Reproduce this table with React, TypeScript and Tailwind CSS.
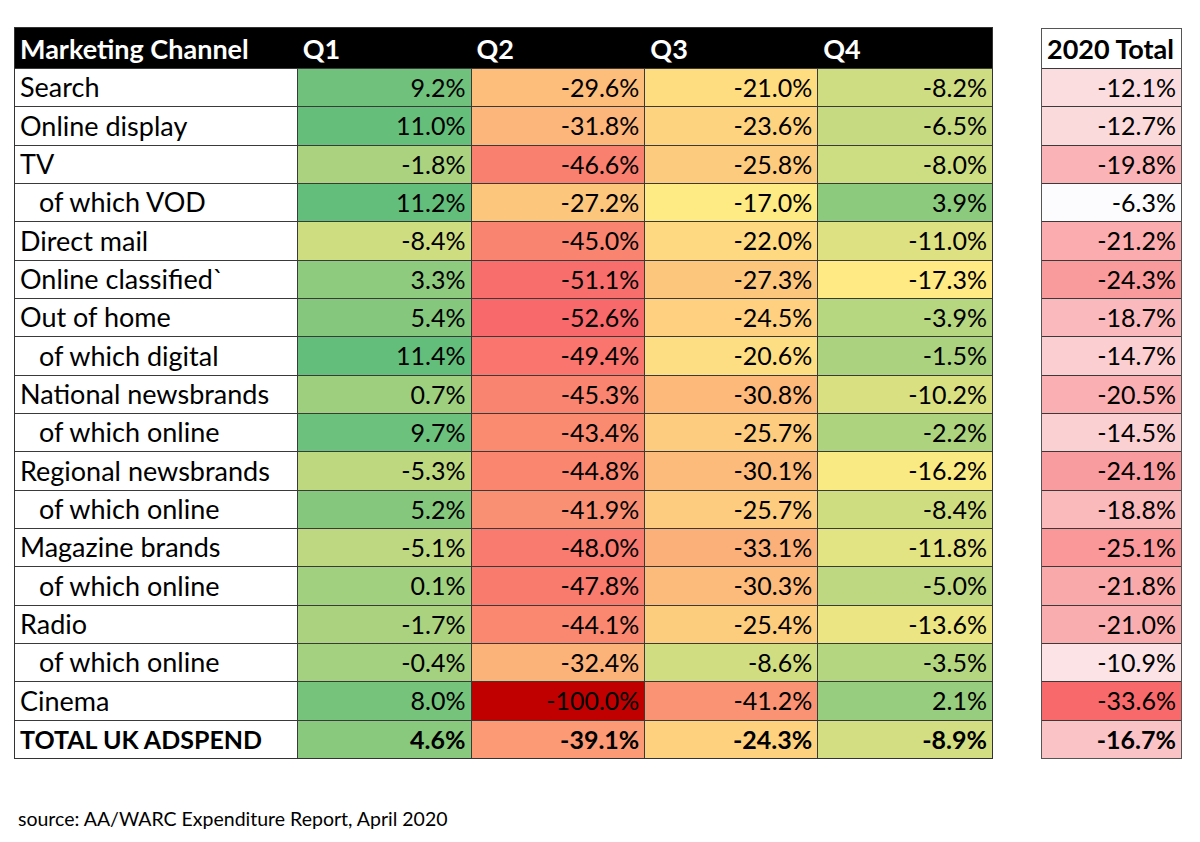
import React from "react";

type Row = { label: string; indent?: boolean; bold?: boolean; q: number[]; total: number };

const rows: Row[] = [
  { label: "Search", q: [9.2, -29.6, -21.0, -8.2], total: -12.1 },
  { label: "Online display", q: [11.0, -31.8, -23.6, -6.5], total: -12.7 },
  { label: "TV", q: [-1.8, -46.6, -25.8, -8.0], total: -19.8 },
  { label: "of which VOD", indent: true, q: [11.2, -27.2, -17.0, 3.9], total: -6.3 },
  { label: "Direct mail", q: [-8.4, -45.0, -22.0, -11.0], total: -21.2 },
  { label: "Online classified`", q: [3.3, -51.1, -27.3, -17.3], total: -24.3 },
  { label: "Out of home", q: [5.4, -52.6, -24.5, -3.9], total: -18.7 },
  { label: "of which digital", indent: true, q: [11.4, -49.4, -20.6, -1.5], total: -14.7 },
  { label: "National newsbrands", q: [0.7, -45.3, -30.8, -10.2], total: -20.5 },
  { label: "of which online", indent: true, q: [9.7, -43.4, -25.7, -2.2], total: -14.5 },
  { label: "Regional newsbrands", q: [-5.3, -44.8, -30.1, -16.2], total: -24.1 },
  { label: "of which online", indent: true, q: [5.2, -41.9, -25.7, -8.4], total: -18.8 },
  { label: "Magazine brands", q: [-5.1, -48.0, -33.1, -11.8], total: -25.1 },
  { label: "of which online", indent: true, q: [0.1, -47.8, -30.3, -5.0], total: -21.8 },
  { label: "Radio", q: [-1.7, -44.1, -25.4, -13.6], total: -21.0 },
  { label: "of which online", indent: true, q: [-0.4, -32.4, -8.6, -3.5], total: -10.9 },
  { label: "Cinema", q: [8.0, -100.0, -41.2, 2.1], total: -33.6 },
  { label: "TOTAL UK ADSPEND", bold: true, q: [4.6, -39.1, -24.3, -8.9], total: -16.7 },
];

const RED = [248, 105, 107];
const YEL = [255, 235, 132];
const GRN = [99, 190, 123];
const WHT = [252, 252, 255];

function mix(a: number[], b: number[], t: number) {
  const c = a.map((x, i) => Math.round(x + (b[i] - x) * t));
  return `rgb(${c[0]},${c[1]},${c[2]})`;
}

function qColor(v: number) {
  if (v <= -100) return "#C00000";
  const min = -52.6;
  const mid = -17.1;
  const max = 11.4;
  if (v <= mid) {
    const t = Math.max(0, Math.min(1, (v - min) / (mid - min)));
    return mix(RED, YEL, t);
  }
  const t = Math.max(0, Math.min(1, (v - mid) / (max - mid)));
  return mix(YEL, GRN, t);
}

function tColor(v: number) {
  const min = -33.6;
  const max = -6.3;
  const t = Math.max(0, Math.min(1, (v - min) / (max - min)));
  return mix(RED, WHT, t);
}

const fmt = (v: number) => `${v.toFixed(1)}%`;

const qWidths = ["w-[174px]", "w-[174px]", "w-[173px]", "w-[174px]"];

export default function App() {
  return (
    <div
      className="w-[1200px] h-[842px] bg-white text-black pt-[27px] pl-[14px]"
      style={{ fontFamily: "Lato, 'Open Sans', sans-serif" }}
    >
      <div className="flex items-start">
        {/* Main table */}
        <div className="flex flex-col w-[979px] border border-[#333]">
          <div className="flex h-[40px] bg-black text-white font-bold text-[27px] leading-none items-center">
            <div className="w-[283px] pl-[5px]">Marketing Channel</div>
            {["Q1", "Q2", "Q3", "Q4"].map((q, i) => (
              <div key={q} className={`${qWidths[i]} pl-[5px]`}>
                {q}
              </div>
            ))}
          </div>
          {rows.map((r, ri) => (
            <div
              key={ri}
              className={`flex h-[38.33px] border-t border-[#3a3a3a] text-[25px] ${r.bold ? "font-bold" : ""}`}
            >
              <div
                className={`w-[283px] border-r border-[#3a3a3a] flex items-center ${r.indent ? "pl-[24px]" : "pl-[5px]"} ${r.bold ? "text-[25px]" : "text-[27px]"} bg-white`}
              >
                {r.label}
              </div>
              {r.q.map((v, i) => (
                <div
                  key={i}
                  className={`${qWidths[i]} flex items-center justify-end pr-[5px] ${i < 3 ? "border-r border-[#3a3a3a]" : ""}`}
                  style={{ backgroundColor: qColor(v) }}
                >
                  {fmt(v)}
                </div>
              ))}
            </div>
          ))}
        </div>

        {/* Total table */}
        <div className="ml-[48px] flex flex-col w-[141px] border border-[#555] mt-[1px]">
          <div className="flex h-[39px] bg-white font-bold text-[27px] leading-none items-center pl-[5px]">
            2020 Total
          </div>
          {rows.map((r, ri) => (
            <div
              key={ri}
              className={`flex h-[38.33px] border-t border-[#3a3a3a] text-[25px] items-center justify-end pr-[5px] ${r.bold ? "font-bold" : ""}`}
              style={{ backgroundColor: tColor(r.total) }}
            >
              {fmt(r.total)}
            </div>
          ))}
        </div>
      </div>

      <div className="mt-[45px] pl-[4px] text-[19.5px]">source: AA/WARC Expenditure Report, April 2020</div>
    </div>
  );
}
